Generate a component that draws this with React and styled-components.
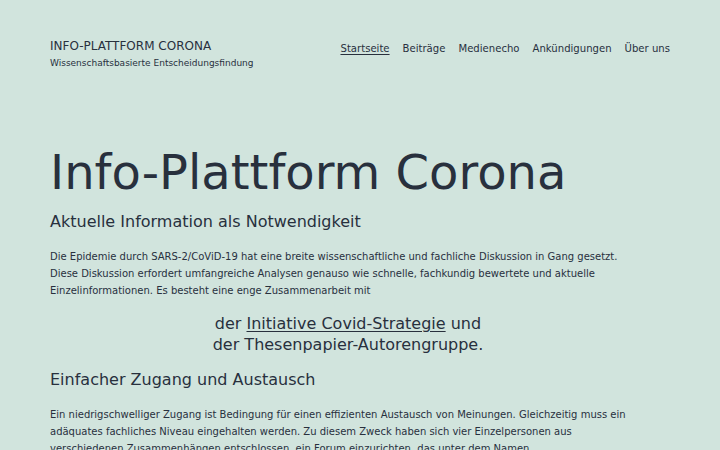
import React from "react";
import styled, { createGlobalStyle } from "styled-components";

const GlobalStyle = createGlobalStyle`
  html, body {
    margin: 0;
    padding: 0;
    background: #d1e4dd;
  }
  body {
    font-family: "DejaVu Sans", "Liberation Sans", sans-serif;
    color: #28303d;
  }
`;

const navItems = ["Startseite", "Beiträge", "Medienecho", "Ankündigungen", "Über uns"];

export default function App() {
  return (
    <>
      <GlobalStyle />
      <Page>
        <Header>
          <Branding>
            <SiteTitle>INFO-PLATTFORM CORONA</SiteTitle>
            <Tagline>Wissenschaftsbasierte Entscheidungsfindung</Tagline>
          </Branding>
          <Nav>
            {navItems.map((item, i) => (
              <NavLink key={item} $current={i === 0} href="#">
                {item}
              </NavLink>
            ))}
          </Nav>
        </Header>
        <Main>
          <Title>Info-Plattform Corona</Title>
          <Heading $top={9}>Aktuelle Information als Notwendigkeit</Heading>
          <Paragraph $top={15}>
            Die Epidemie durch SARS-2/CoViD-19 hat eine breite wissenschaftliche und fachliche
            Diskussion in Gang gesetzt. Diese Diskussion erfordert umfangreiche Analysen genauso
            wie schnelle, fachkundig bewertete und aktuelle Einzelinformationen. Es besteht eine
            enge Zusammenarbeit mit
          </Paragraph>
          <Centered>
            der <TextLink href="#">Initiative Covid-Strategie</TextLink> und
            <br />
            der Thesenpapier-Autorengruppe.
          </Centered>
          <Heading $top={14}>Einfacher Zugang und Austausch</Heading>
          <Paragraph $top={15}>
            Ein niedrigschwelliger Zugang ist Bedingung für einen effizienten Austausch von
            Meinungen. Gleichzeitig muss ein adäquates fachliches Niveau eingehalten werden. Zu
            diesem Zweck haben sich vier Einzelpersonen aus verschiedenen Zusammenhängen
            entschlossen, ein Forum einzurichten, das unter dem Namen
          </Paragraph>
        </Main>
      </Page>
    </>
  );
}

const Page = styled.div`
  padding: 0 50px;
  height: 450px;
  overflow: hidden;
`;

const Header = styled.header`
  display: flex;
  justify-content: space-between;
  align-items: flex-start;
  padding-top: 38px;
`;

const Branding = styled.div`
  display: flex;
  flex-direction: column;
`;

const SiteTitle = styled.div`
  font-size: 12px;
  line-height: 16px;
`;

const Tagline = styled.div`
  font-size: 9px;
  line-height: 14px;
  margin-top: 2px;
`;

const Nav = styled.nav`
  display: flex;
  gap: 13px;
  padding-top: 3px;
`;

const NavLink = styled.a`
  font-size: 10.1px;
  line-height: 16px;
  color: #28303d;
  text-decoration: ${(p) => (p.$current ? "underline" : "none")};
  text-underline-offset: 2px;
`;

const Main = styled.main`
  max-width: 596px;
  padding-top: 72px;
`;

const Title = styled.h1`
  margin: 0;
  font-weight: 400;
  font-size: 48px;
  line-height: 60px;
`;

const Heading = styled.h2`
  margin: ${(p) => p.$top}px 0 0;
  font-weight: 400;
  font-size: 16px;
  line-height: 22px;
`;

const Paragraph = styled.p`
  margin: ${(p) => p.$top}px 0 0;
  font-size: 10px;
  line-height: 17px;
`;

const Centered = styled.p`
  margin: 14px 0 0;
  text-align: center;
  font-size: 16px;
  line-height: 21px;
`;

const TextLink = styled.a`
  color: #28303d;
  text-decoration: underline;
  text-underline-offset: 2px;
  text-decoration-thickness: 1px;
`;
